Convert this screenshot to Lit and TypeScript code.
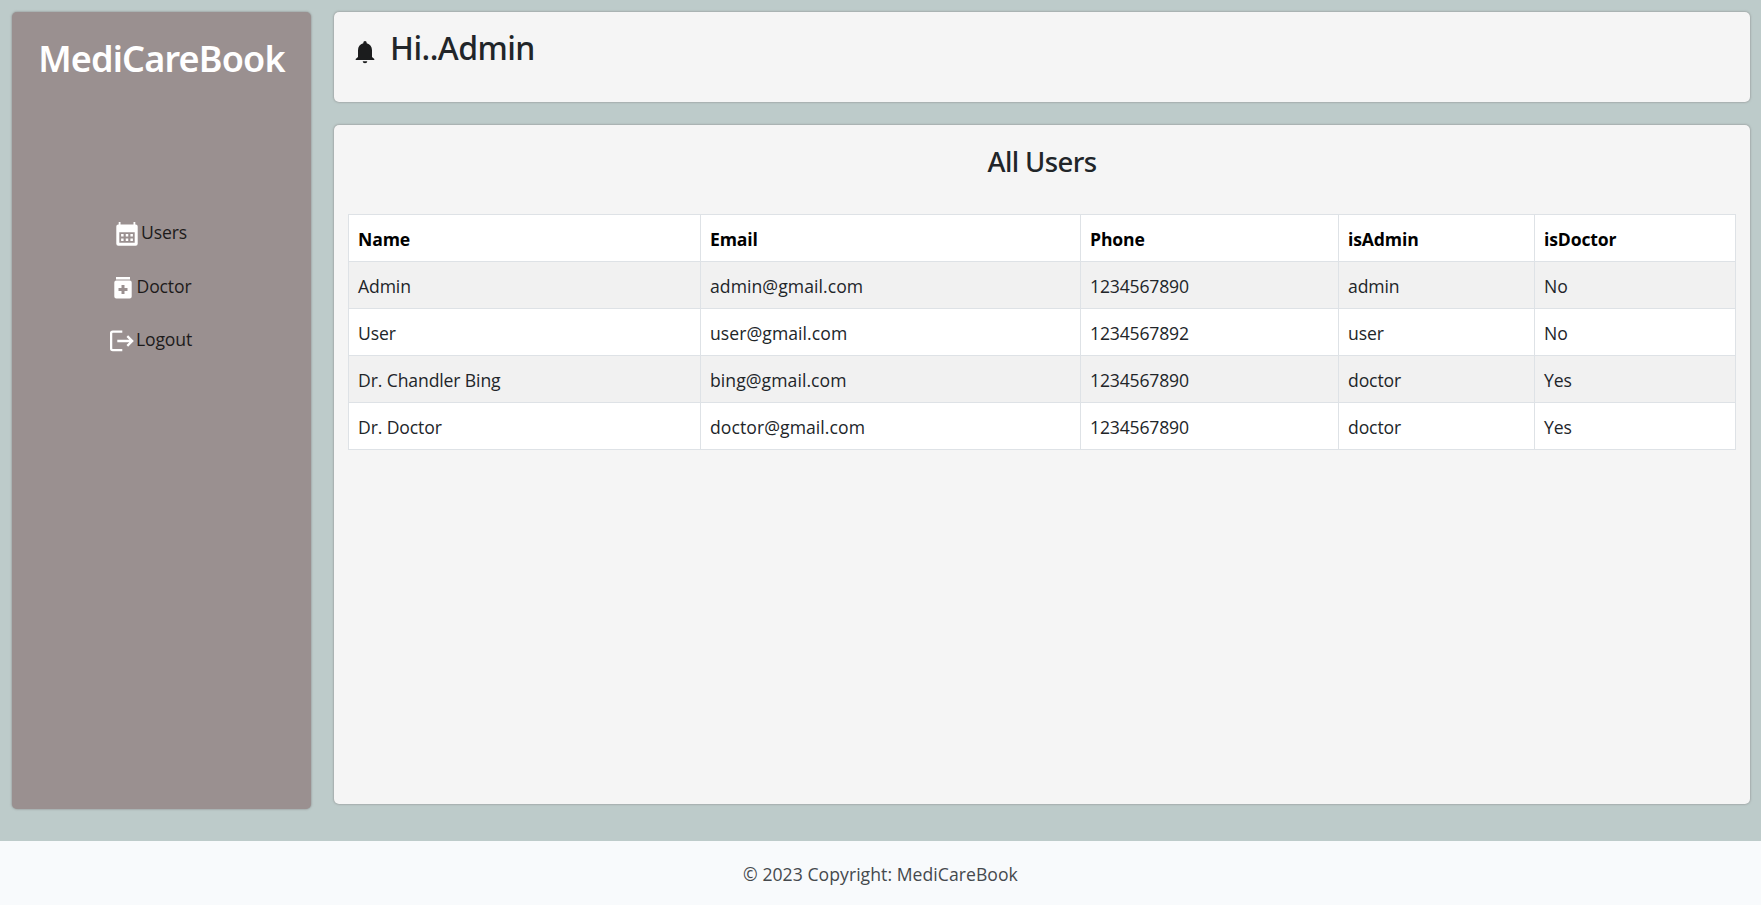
import { LitElement, html, css, svg } from "lit";
import { customElement } from "lit/decorators.js";

interface User {
  name: string;
  email: string;
  phone: string;
  role: string;
  isDoctor: boolean;
}

const USERS: User[] = [
  { name: "Admin", email: "admin@gmail.com", phone: "1234567890", role: "admin", isDoctor: false },
  { name: "User", email: "user@gmail.com", phone: "1234567892", role: "user", isDoctor: false },
  { name: "Dr. Chandler Bing", email: "bing@gmail.com", phone: "1234567890", role: "doctor", isDoctor: true },
  { name: "Dr. Doctor", email: "doctor@gmail.com", phone: "1234567890", role: "doctor", isDoctor: true },
];

const calendarIcon = svg`
  <path fill="currentColor" fill-rule="evenodd" d="M3.7 0h1.8v2.5h13V0h1.8v2.5h.4a2 2 0 0 1 2 2v17.2a2 2 0 0 1-2 2H3.3a2 2 0 0 1-2-2V4.5a2 2 0 0 1 2-2h.4zM4.3 10.2v10.6h15.4V10.2z"/>
  <path fill="currentColor" d="M6.1 12.1h2.5v2.5H6.1zM10.75 12.1h2.5v2.5h-2.5zM15.4 12.1h2.5v2.5h-2.5zM6.1 16.4h2.5v2.5H6.1zM10.75 16.4h2.5v2.5h-2.5zM15.4 16.4h2.5v2.5h-2.5z"/>`;

const medicineIcon = svg`
  <path fill="currentColor" fill-rule="evenodd" d="M5 1h14v2.4H5zM5.3 4.4h13.4a2 2 0 0 1 2 2v14.2a2 2 0 0 1-2 2H5.3a2 2 0 0 1-2-2V6.4a2 2 0 0 1 2-2zM10.5 9v3H7.5v3h3v3h3v-3h3v-3h-3V9z"/>`;

const logoutIcon = svg`
  <path fill="none" stroke="currentColor" stroke-width="2.3" d="M12.3 2.600H2.700a1.600 1.600 0 0 0-1.600 1.600v15.400a1.600 1.600 0 0 0 1.600 1.600h9.600M7.300 12h14.800M17.300 7.100l4.900 4.900-4.900 4.900"/>`;

@customElement("app-root")
class AppRoot extends LitElement {
  static styles = css`
    :host {
      display: block;
      height: 905px;
      overflow: hidden;
      background: #bdcbca;
      color: #212529;
      font-family: "Open Sans", "Noto Sans", sans-serif;
      font-size: 17.6px;
      line-height: 28px;
    }
    * { box-sizing: border-box; }
    .page { height: 100%; display: flex; flex-direction: column; }
    .layout { height: 841px; display: flex; gap: 23px; padding: 12px 11px 0 12px; }
    .panel { border-radius: 5px; box-shadow: 0 0 2.5px #808080; background: #f5f5f5; }
    .sidebar {
      width: 299px;
      height: 797px;
      background: #9a9090;
      color: #fff;
      text-align: center;
      padding-top: 25px;
    }
    .brand {
      margin: 0;
      font: 600 36px/44px "Noto Sans", sans-serif;
      letter-spacing: -0.82px;
    }
    .menu { list-style: none; margin: 0; padding: 137px 21px 0 0; display: grid; row-gap: 25.5px; }
    .item { display: flex; justify-content: center; gap: 2px; height: 28px; }
    .item svg { width: 24px; height: 24px; margin-top: 4px; }
    .label { color: #1d1b1b; letter-spacing: -0.15px; }
    .main { flex: 1; display: flex; flex-direction: column; gap: 23px; }
    .header { height: 90px; display: flex; padding: 17px 0 0 19px; }
    .bell { width: 24px; height: 24px; margin-top: 10.5px; color: #1b1c1d; }
    .greeting {
      margin: 0 0 0 13px;
      font: 500 32px/38px "Noto Sans", sans-serif;
      letter-spacing: -0.55px;
    }
    .content { height: 679px; padding: 20px 14px 0; }
    .title {
      margin: 0;
      height: 69px;
      text-align: center;
      font: 500 27.5px/34px "Noto Sans", sans-serif;
      letter-spacing: -0.62px;
    }
    .users { width: 1388px; table-layout: fixed; border-collapse: collapse; background: #fff; }
    .c-name { width: 352px; }
    .c-email { width: 380px; }
    .c-phone { width: 258px; }
    .c-admin { width: 196px; }
    th, td {
      border: 1px solid #dee2e6;
      height: 47px;
      padding: 1px 9px 0;
      text-align: left;
      vertical-align: middle;
    }
    th { color: #000; font-weight: 700; letter-spacing: -0.15px; }
    td { letter-spacing: -0.12px; }
    tbody tr:nth-child(odd) { background: #f1f1f1; }
    td.num { letter-spacing: -0.17px; }
    td.mail { letter-spacing: 0.06px; }
    .footer {
      flex: 1;
      background: #f8fafc;
      color: #45494d;
      text-align: center;
      padding-top: 19px;
      letter-spacing: 0.05px;
    }
  `;

  private menuItem(icon: unknown, label: string) {
    return html`<li class="item"><svg viewBox="0 0 24 24">${icon}</svg><span class="label">${label}</span></li>`;
  }

  render() {
    return html`
      <div class="page">
        <div class="layout">
          <aside class="panel sidebar">
            <h1 class="brand">MediCareBook</h1>
            <ul class="menu">
              ${this.menuItem(calendarIcon, "Users")}
              ${this.menuItem(medicineIcon, "Doctor")}
              ${this.menuItem(logoutIcon, "Logout")}
            </ul>
          </aside>
          <main class="main">
            <header class="panel header">
              <svg class="bell" viewBox="0 0 24 24">
                <path fill="currentColor" d="M12 1a1.7 1.7 0 0 1 1.7 1.7v.5c3.4.8 5.3 3.6 5.3 7.1v6.8l2.3 1.9v1.1H2.7V19L5 17.1v-6.8c0-3.5 1.9-6.3 5.3-7.1v-.5A1.7 1.7 0 0 1 12 1zM9.7 21.2h4.6a2.3 2.1 0 0 1-4.6 0z"/>
              </svg>
              <h2 class="greeting">Hi..Admin</h2>
            </header>
            <section class="panel content">
              <h3 class="title">All Users</h3>
              <table class="users">
                <colgroup>
                  <col class="c-name" /><col class="c-email" /><col class="c-phone" /><col class="c-admin" /><col />
                </colgroup>
                <thead>
                  <tr><th>Name</th><th>Email</th><th>Phone</th><th>isAdmin</th><th>isDoctor</th></tr>
                </thead>
                <tbody>
                  ${USERS.map(
                    (u) => html`<tr>
                      <td>${u.name}</td>
                      <td class="mail">${u.email}</td>
                      <td class="num">${u.phone}</td>
                      <td>${u.role}</td>
                      <td>${u.isDoctor ? "Yes" : "No"}</td>
                    </tr>`
                  )}
                </tbody>
              </table>
            </section>
          </main>
        </div>
        <footer class="footer">© 2023 Copyright: MediCareBook</footer>
      </div>
    `;
  }
}
